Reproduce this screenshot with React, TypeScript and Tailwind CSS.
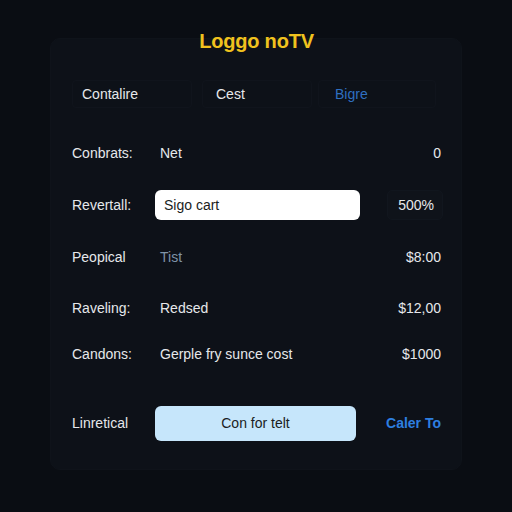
import React from "react";

const font = { fontFamily: '"Liberation Sans", Arial, sans-serif' };

function Row({
  label,
  children,
  right,
  className = "",
}: {
  label: string;
  children: React.ReactNode;
  right: React.ReactNode;
  className?: string;
}) {
  return (
    <div className={`flex items-center ${className}`}>
      <div className="w-[83px] shrink-0 text-[14px] text-[#e6e8eb]">{label}</div>
      <div className="flex-1 flex items-center">{children}</div>
      <div className="flex items-center justify-end">{right}</div>
    </div>
  );
}

export default function App() {
  return (
    <div className="w-[512px] h-[512px] bg-[#0a0d13] overflow-hidden pt-[38px]" style={font}>
      <div className="mx-[50px] w-[412px] h-[432px] rounded-[10px] bg-[#0d1118] border border-[#0f131a] pl-[21px] pr-[20px]">
        <div className="-mt-[10px] h-[24px] flex items-center justify-center text-[20px] font-bold text-[#f0c21e] tracking-[-0.2px]">
          Loggo noTV
        </div>

        <div className="mt-[27px] flex h-[28px] text-[14px]">
          <div className="w-[120px] pl-[9px] flex items-center rounded-[4px] border border-[#10141c] text-[#e6e8eb]">
            Contalire
          </div>
          <div className="ml-[10px] w-[110px] pl-[13px] flex items-center rounded-[4px] border border-[#10141c] text-[#e6e8eb]">
            Cest
          </div>
          <div className="ml-[6px] w-[118px] pl-[16px] flex items-center rounded-[4px] border border-[#10141c] text-[#2f6fc0]">
            Bigre
          </div>
        </div>

        <Row
          label="Conbrats:"
          className="mt-[30px] h-[30px]"
          right={<span className="text-[14px] text-[#e6e8eb]">0</span>}
        >
          <span className="pl-[5px] text-[14px] text-[#e6e8eb]">Net</span>
        </Row>

        <Row
          label="Revertall:"
          className="mt-[22px] h-[30px]"
          right={
            <div className="ml-[27px] w-[56px] h-[30px] rounded-[5px] bg-[#0f131a] border border-[#11161e] flex items-center justify-end pr-[8px] text-[14px] text-[#e6e8eb]">
              500%
            </div>
          }
        >
          <div className="w-[205px] h-[30px] rounded-[6px] bg-white flex items-center pl-[9px] text-[14px] text-[#1a1d22]">
            Sigo cart
          </div>
        </Row>

        <Row
          label="Peopical"
          className="mt-[22px] h-[30px]"
          right={<span className="text-[14px] text-[#e6e8eb]">$8:00</span>}
        >
          <span className="pl-[5px] text-[14px] text-[#7f93a8]">Tist</span>
        </Row>

        <Row
          label="Raveling:"
          className="mt-[21px] h-[30px]"
          right={<span className="text-[14px] text-[#e6e8eb]">$12,00</span>}
        >
          <span className="pl-[5px] text-[14px] text-[#e6e8eb]">Redsed</span>
        </Row>

        <Row
          label="Candons:"
          className="mt-[16px] h-[30px]"
          right={<span className="text-[14px] text-[#e6e8eb]">$1000</span>}
        >
          <span className="pl-[5px] text-[14px] text-[#e6e8eb]">Gerple fry sunce cost</span>
        </Row>

        <Row
          label="Linretical"
          className="mt-[37px] h-[35px]"
          right={<span className="text-[14px] font-bold text-[#2d7fe0]">Caler To</span>}
        >
          <div className="w-[201px] h-[35px] rounded-[6px] bg-[#c6e6fb] flex items-center justify-center text-[14px] text-[#1a1d22]">
            Con for telt
          </div>
        </Row>
      </div>
    </div>
  );
}
